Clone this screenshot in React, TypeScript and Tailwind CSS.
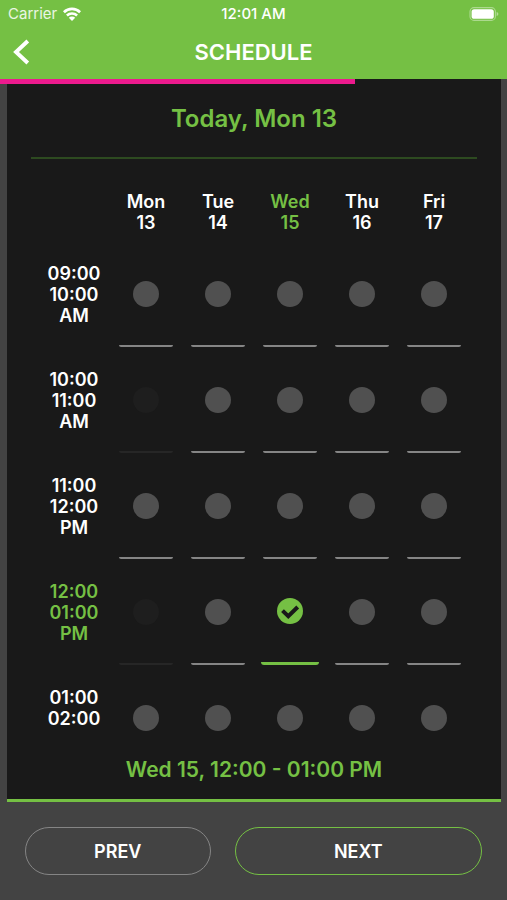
import { useState } from "react";
import clsx from "clsx";

const DAYS = [
  { name: "Mon", date: "13" },
  { name: "Tue", date: "14" },
  { name: "Wed", date: "15" },
  { name: "Thu", date: "16" },
  { name: "Fri", date: "17" },
];

const SLOTS = [
  { from: "09:00", to: "10:00", period: "AM", taken: [] },
  { from: "10:00", to: "11:00", period: "AM", taken: [0] },
  { from: "11:00", to: "12:00", period: "PM", taken: [] },
  { from: "12:00", to: "01:00", period: "PM", taken: [0] },
  { from: "01:00", to: "02:00", period: "PM", taken: [] },
] as { from: string; to: string; period: string; taken: number[] }[];

function StatusBar() {
  return (
    <div className="grid h-7 grid-cols-3 items-center px-2 leading-5 text-white">
      <div className="flex items-center gap-1.5 text-[15px] text-white/85">
        <span>Carrier</span>
        <svg viewBox="0 0 18 14" className="h-3.5 w-[18px]" fill="none" aria-hidden>
          <path d="M.9 5.200a11.600 11.600 0 0 1 16.200 0" stroke="#fff" strokeWidth="2.700" />
          <path d="M3.900 8.500a7.200 7.200 0 0 1 10.200 0" stroke="#fff" strokeWidth="2.500" />
          <path d="M9 14 5.800 10.800a4.500 4.500 0 0 1 6.400 0z" fill="#fff" />
        </svg>
      </div>
      <span className="text-center text-[15px] font-medium">12:01 AM</span>
      <svg viewBox="0 0 30 14" className="h-3.5 w-[30px] justify-self-end" fill="none" aria-hidden>
        <rect x="1" y="0.6" width="25.4" height="12.8" rx="4" stroke="#fff" strokeOpacity="0.4" strokeWidth="1.1" />
        <rect x="2.6" y="2.2" width="22.2" height="9.6" rx="2.6" fill="#fff" />
        <path d="M27.600 5v4c1-.4 1.700-1.100 1.700-2s-.7-1.600-1.700-2z" fill="#fff" fillOpacity="0.45" />
      </svg>
    </div>
  );
}

function Header() {
  return (
    <header className="shrink-0 bg-[#75c044]">
      <StatusBar />
      <div className="grid h-[51px] grid-cols-[48px_1fr_48px] items-center pb-1">
        <button type="button" aria-label="Back" className="flex h-full items-center pl-3">
          <svg viewBox="0 0 18 26" className="h-[26px] w-[18px]" fill="none" stroke="#fff" strokeWidth="3.900" aria-hidden>
            <path d="M15.800 2 4 13l11.800 11" strokeLinejoin="miter" />
          </svg>
        </button>
        <h1 className="text-center text-[22px] font-semibold leading-7 text-white">SCHEDULE</h1>
      </div>
    </header>
  );
}

function Dot({ selected, taken }: { selected: boolean; taken: boolean }) {
  if (selected) {
    return (
      <svg viewBox="0 0 26 26" className="size-[26px]" aria-hidden>
        <circle cx="13" cy="13" r="13" fill="#75c044" />
        <path d="m5.500 12.600 5.800 5.600 9.400-9.200" fill="none" stroke="#191919" strokeWidth="4" />
      </svg>
    );
  }
  return <span className={clsx("size-[26px] rounded-full", taken ? "bg-[#1e1e1e]" : "bg-[#505050]")} />;
}

export default function App() {
  const [selected, setSelected] = useState({ row: 3, col: 2 });
  const slot = SLOTS[selected.row];
  const day = DAYS[selected.col];

  return (
    <div className="flex h-screen flex-col bg-[#434343] font-['Inter','Liberation_Sans',sans-serif]">
      <Header />

      <main className="relative flex min-h-0 flex-1 flex-col pl-[7px] pr-1.5">
        <div className="absolute left-0 top-0 h-[5px] w-[70%] bg-[#ec1a8d]" />

        <section className="flex min-h-0 flex-1 flex-col border-b-[3px] border-[#75c044] bg-[#191919]">
          <h2 className="mx-6 flex h-20 shrink-0 items-center justify-center border-b-2 border-[#2d4a20] pt-0.5 text-2xl font-semibold text-[#75c044]">
            Today, Mon 13
          </h2>

          <div className="mx-[31px] mt-8 min-h-0 flex-1 overflow-y-auto [scrollbar-width:none]">
            <table className="w-full table-fixed border-collapse text-[18px] leading-[21px] text-white">
              <thead>
                <tr className="h-[50px] align-top">
                  <td />
                  {DAYS.map((d, col) => (
                    <th
                      key={d.date}
                      scope="col"
                      className={clsx("p-0 font-semibold", col === selected.col && "text-[#75c044]")}
                    >
                      {d.name}
                      <br />
                      {d.date}
                    </th>
                  ))}
                </tr>
              </thead>
              <tbody>
                {SLOTS.map((s, row) => (
                  <tr key={s.from}>
                    <th
                      scope="row"
                      className={clsx("p-0 font-semibold", row === selected.row && "text-[#75c044]")}
                    >
                      <span className="block">{s.from}</span>
                      <span className="block">{s.to}</span>
                      <span className="block">{s.period}</span>
                    </th>
                    {DAYS.map((d, col) => {
                      const isSelected = row === selected.row && col === selected.col;
                      const taken = s.taken.includes(col);
                      return (
                        <td key={d.date} className="p-0">
                          <button
                            type="button"
                            disabled={taken}
                            aria-pressed={isSelected}
                            aria-label={`${d.name} ${d.date}, ${s.from} - ${s.to} ${s.period}`}
                            onClick={() => setSelected({ row, col })}
                            className={clsx(
                              "mx-auto flex h-[106px] items-center justify-center",
                              isSelected
                                ? "w-[58px] rounded-[3px] border-b-[3px] border-[#75c044]"
                                : "w-[54px] rounded-xs border-b-2 pt-0.5",
                              !isSelected && (taken ? "border-[#262626]" : "border-[#858585]"),
                            )}
                          >
                            <Dot selected={isSelected} taken={taken} />
                          </button>
                        </td>
                      );
                    })}
                  </tr>
                ))}
              </tbody>
            </table>
          </div>

          <p className="flex h-[67px] shrink-0 items-center justify-center pt-2 text-[21px] font-semibold text-[#75c044]">
            {day.name} {day.date}, {slot.from} - {slot.to} {slot.period}
          </p>
        </section>
      </main>

      <nav className="grid shrink-0 grid-cols-[3fr_4fr] gap-6 px-[25px] py-[25px] text-[18px] font-semibold text-white">
        <button type="button" className="h-12 rounded-full border border-[#858585]">
          PREV
        </button>
        <button type="button" className="h-12 rounded-full border border-[#75c044]">
          NEXT
        </button>
      </nav>
    </div>
  );
}
